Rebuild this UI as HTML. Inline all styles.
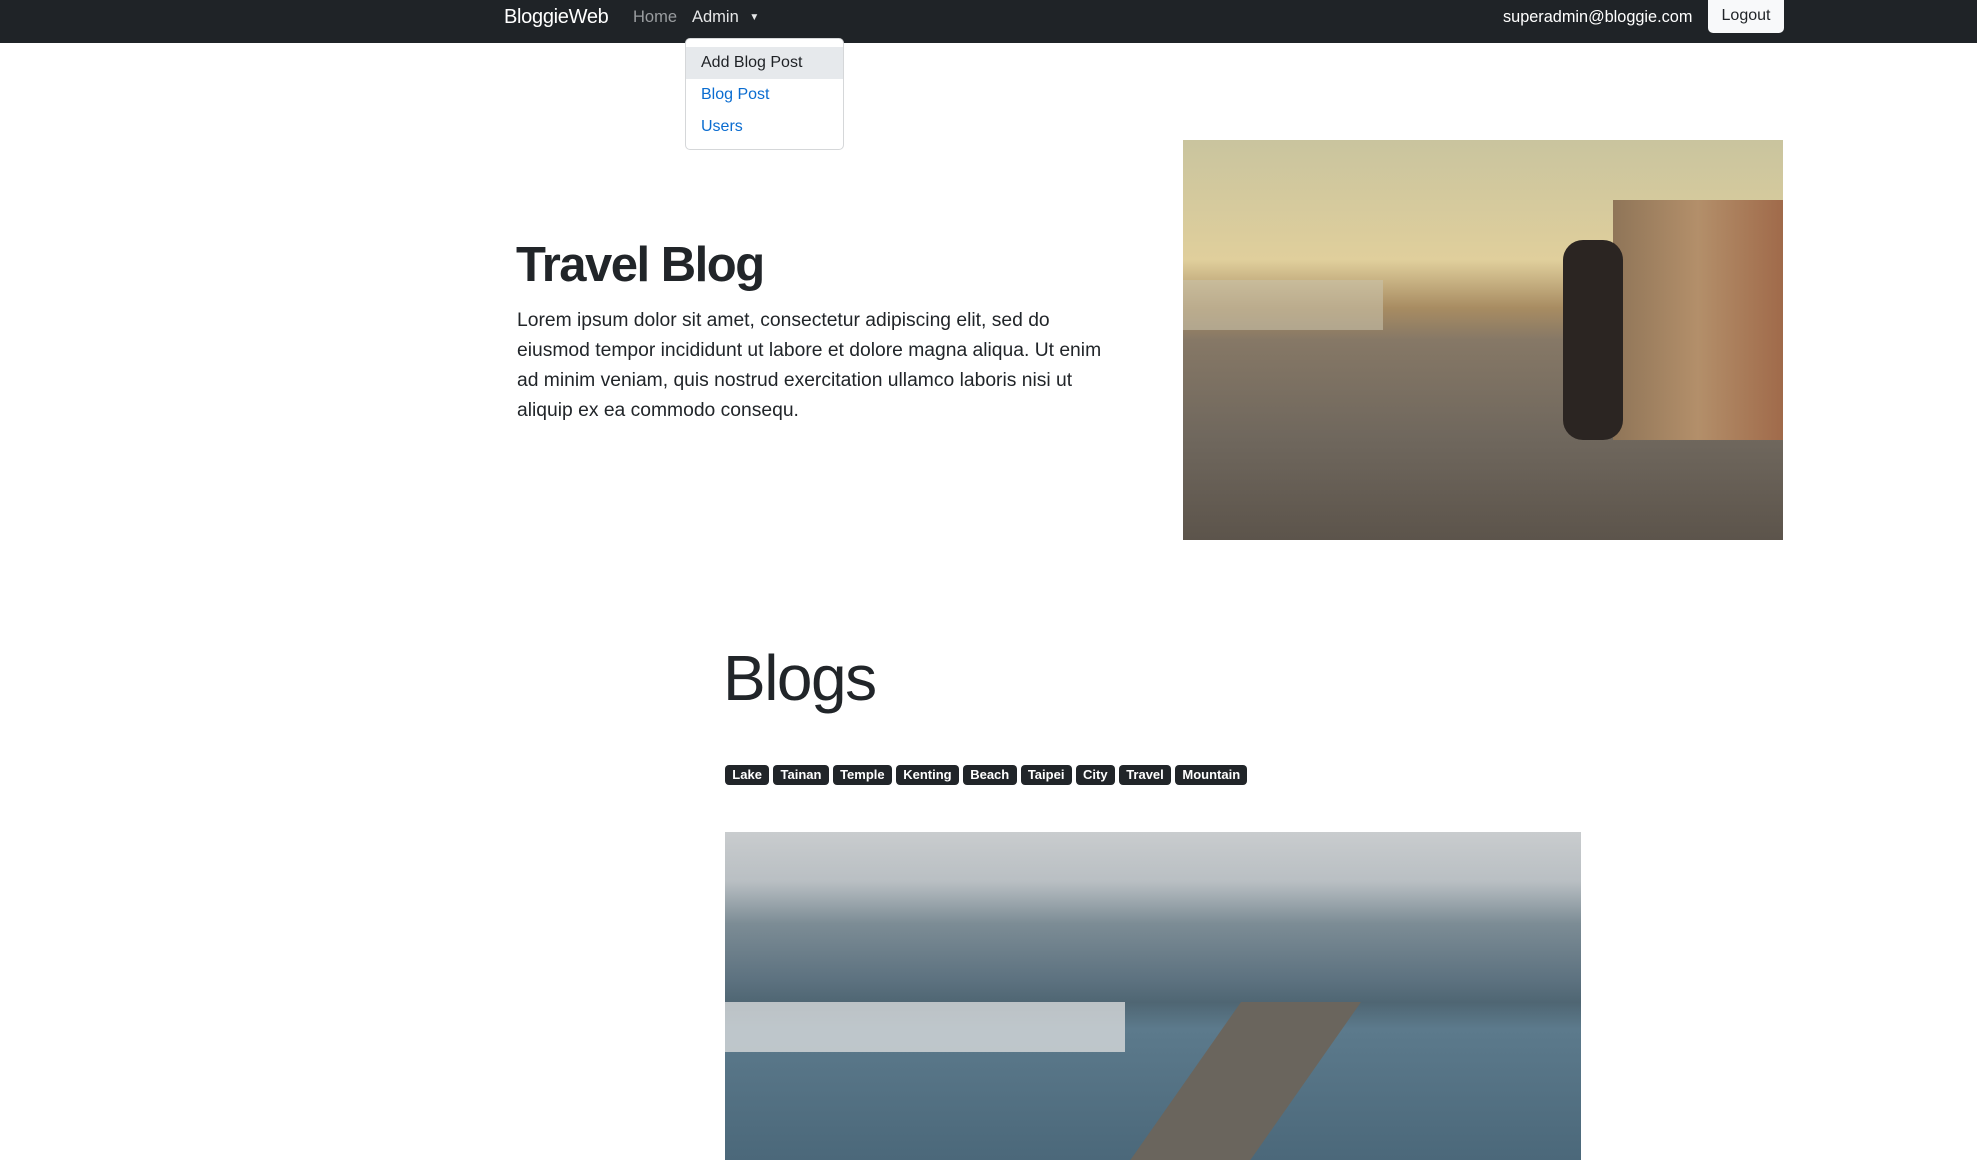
<!DOCTYPE html>
<html><head><style>
*{box-sizing:border-box;margin:0;padding:0}
body{width:1977px;height:1160px;overflow:hidden;background:#fff;font-family:"Liberation Sans",sans-serif;color:#212529;position:relative}
.nav{position:absolute;left:0;top:0;width:1977px;height:43px;background:#1f2327}
.a{position:absolute;white-space:nowrap}
.dd{position:absolute;left:685px;top:38px;width:159px;height:112px;background:#fff;border:1px solid #d5d7d9;border-radius:5px}
.dd div{position:absolute;left:0;width:157px;height:32px;padding-left:15px;font-size:16px;line-height:32px;color:#0d6efd}
.tag{display:inline-block;background:#212529;color:#fff;font-weight:bold;font-size:13px;height:20px;line-height:20px;padding:0 7.3px;border-radius:4px;margin-right:4px}
</style></head><body>
<div class="nav"></div>
<div class="a" style="left:504px;top:5px;font-size:20px;color:#fff;line-height:24px;letter-spacing:-0.3px">BloggieWeb</div>
<div class="a" style="left:633px;top:6px;font-size:16.5px;color:#9a9da0;line-height:22px">Home</div>
<div class="a" style="left:692px;top:6px;font-size:16.5px;color:#e6e7e8;line-height:22px">Admin <span style="font-size:10px;position:relative;top:-2px;margin-left:6px">▼</span></div>
<div class="a" style="left:1503px;top:6px;font-size:16.3px;color:#fff;line-height:22px">superadmin@bloggie.com</div>
<div class="a" style="left:1708px;top:0;width:76px;height:33px;background:#f8f9fa;border-radius:0 0 5px 5px;font-size:16px;line-height:31px;text-align:center;color:#212529">Logout</div>
<div class="dd">
<div style="top:8px;background:#e6e9ec;color:#1e2125">Add Blog Post</div>
<div style="top:40px;color:#0a6cd0">Blog Post</div>
<div style="top:72px;color:#0a6cd0">Users</div>
</div>
<div class="a" style="left:516px;top:235px;font-size:49px;font-weight:bold;line-height:60px;letter-spacing:-1.5px">Travel Blog</div>
<div class="a" style="left:517px;top:306px;width:600px;white-space:normal;font-size:19.3px;line-height:30px">Lorem ipsum dolor sit amet, consectetur adipiscing elit, sed do eiusmod tempor incididunt ut labore et dolore magna aliqua. Ut enim ad minim veniam, quis nostrud exercitation ullamco laboris nisi ut aliquip ex ea commodo consequ.</div>
<div class="a" style="left:1183px;top:140px;width:600px;height:400px;overflow:hidden;background:linear-gradient(180deg,#c9c49e 0%,#e0cf9c 30%,#a88c62 42%,#867866 50%,#6f675d 75%,#5c544b 100%)">
<div style="position:absolute;right:0;top:60px;width:170px;height:240px;background:linear-gradient(90deg,#8f7558,#b38f6a,#a06a4a)"></div>
<div style="position:absolute;left:380px;top:100px;width:60px;height:200px;background:#2b2522;border-radius:20px"></div>
<div style="position:absolute;left:0;top:140px;width:200px;height:50px;background:#c8c2aa;opacity:.6"></div>
</div>
<div class="a" style="left:723px;top:640px;font-size:64px;font-weight:300;line-height:76px;letter-spacing:-1.5px">Blogs</div>
<div class="a" style="left:725px;top:765px">
<span class="tag">Lake</span><span class="tag">Tainan</span><span class="tag">Temple</span><span class="tag">Kenting</span><span class="tag">Beach</span><span class="tag">Taipei</span><span class="tag">City</span><span class="tag">Travel</span><span class="tag">Mountain</span>
</div>
<div class="a" style="left:725px;top:832px;width:856px;height:328px;overflow:hidden;background:linear-gradient(180deg,#c9ccce 0%,#b9bfc3 15%,#7c8c95 28%,#5d7280 45%,#4f6673 52%,#5c7a8c 60%,#4b687a 100%)">
<div style="position:absolute;left:0;top:170px;width:400px;height:50px;background:#d7dadb;opacity:.8"></div>
<div style="position:absolute;left:460px;top:170px;width:120px;height:160px;background:#6a655d;transform:skewX(-35deg)"></div>
</div>
</body></html>
